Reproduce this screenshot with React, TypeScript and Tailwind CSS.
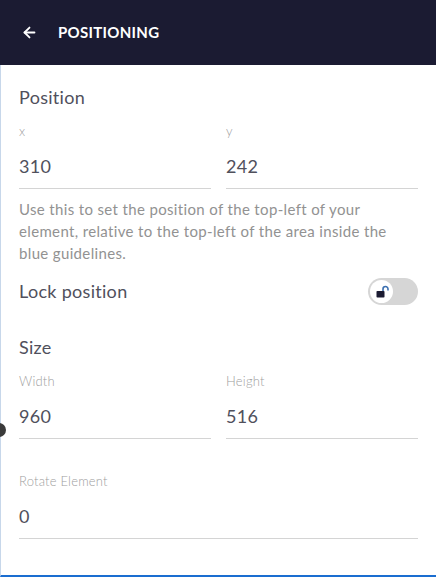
import { ArrowLeft } from 'lucide-react'

const font = { fontFamily: 'Lato, "Open Sans", sans-serif' }

function Field({ label, value }: { label: string; value: string }) {
  return (
    <div className="flex-1">
      <p className="text-[13px] text-[#a0a0a0] font-light leading-[18px] tracking-[0.2px]">{label}</p>
      <p className="text-[18px] text-[#50505c] mt-[14px] leading-[24px] tracking-[0.3px]">{value}</p>
      <div className="h-px bg-[#d4d4d4] mt-[10px]" />
    </div>
  )
}

function LockToggle() {
  return (
    <div className="w-[50px] h-[27px] rounded-full bg-[#d6d6d6] flex items-center px-[2px]">
      <div className="w-[23px] h-[23px] rounded-full bg-white flex items-center justify-center">
        <svg width="14" height="14" viewBox="0 0 14 14">
          <path d="M8 6 V4 a2.5 2.5 0 0 1 5 0 V5.5" fill="none" stroke="#3b6fb0" strokeWidth="1.6" />
          <rect x="1.5" y="6" width="8" height="6.5" rx="0.8" fill="#1b1b32" />
        </svg>
      </div>
    </div>
  )
}

export default function App() {
  return (
    <div className="w-[436px] h-[577px] flex flex-col bg-white overflow-hidden" style={font}>
      <header className="h-[65px] shrink-0 bg-[#1b1b32] flex items-center pl-[21px] gap-[20px]">
        <ArrowLeft size={17} color="white" strokeWidth={2.6} />
        <span className="text-white text-[15px] font-bold tracking-[0.3px]">POSITIONING</span>
      </header>

      <div className="relative flex-1 border-l border-[#c7d7ea] border-b-2 border-b-[#1a6dd0] px-[18px]">
        <div className="absolute left-[-9px] top-[358px] w-[14px] h-[14px] rounded-full bg-[#3a3a3a]" />

        <h2 className="text-[18px] text-[#50505c] mt-[20px] leading-[24px] tracking-[0.3px]">Position</h2>
        <div className="flex gap-[15px] mt-[13px]">
          <Field label="x" value="310" />
          <Field label="y" value="242" />
        </div>
        <p className="text-[15px] text-[#929292] leading-[22px] mt-[9px] tracking-[0.35px]">
          Use this to set the position of the top-left of your element, relative to the top-left of the area inside the
          blue guidelines.
        </p>
        <div className="flex items-center justify-between mt-[14px]">
          <span className="text-[18px] text-[#50505c] tracking-[0.3px]">Lock position</span>
          <LockToggle />
        </div>

        <h2 className="text-[18px] text-[#50505c] mt-[30px] leading-[24px] tracking-[0.3px]">Size</h2>
        <div className="flex gap-[15px] mt-[13px]">
          <Field label="Width" value="960" />
          <Field label="Height" value="516" />
        </div>

        <div className="mt-[33px]">
          <Field label="Rotate Element" value="0" />
        </div>
      </div>
    </div>
  )
}
